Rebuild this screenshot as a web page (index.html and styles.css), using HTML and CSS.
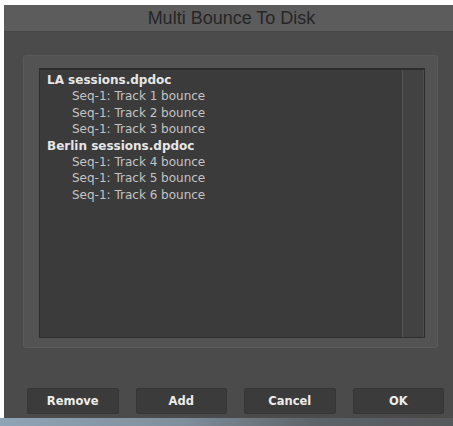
FILE: index.html
```html
<!DOCTYPE html>
<html>
<head>
<meta charset="utf-8">
<link rel="stylesheet" href="styles.css">
</head>
<body>
<div class="window">
  <div class="titlebar">Multi Bounce To Disk</div>
  <div class="panel">
    <div class="listbox">
      <div class="list">
        <div class="row group">LA sessions.dpdoc</div>
        <div class="row item">Seq-1: Track 1 bounce</div>
        <div class="row item">Seq-1: Track 2 bounce</div>
        <div class="row item">Seq-1: Track 3 bounce</div>
        <div class="row group">Berlin sessions.dpdoc</div>
        <div class="row item">Seq-1: Track 4 bounce</div>
        <div class="row item">Seq-1: Track 5 bounce</div>
        <div class="row item">Seq-1: Track 6 bounce</div>
      </div>
      <div class="scrollbar"></div>
    </div>
  </div>
  <div class="buttons">
    <div class="btn">Remove</div>
    <div class="btn">Add</div>
    <div class="btn">Cancel</div>
    <div class="btn">OK</div>
  </div>
</div>
<div class="desktop"></div>
</body>
</html>
```

FILE: styles.css
```css
html, body {
  margin: 0;
  padding: 0;
  background: #ffffff;
  width: 453px;
  height: 426px;
  overflow: hidden;
}

.window {
  margin: 5px 0 0 4px;
  height: 413px;
  background: #4b4b4b;
  display: flex;
  flex-direction: column;
  font-family: "DejaVu Sans", sans-serif;
}

.titlebar {
  height: 27px;
  background: #5c5c5c;
  border-bottom: 1px solid #464646;
  box-sizing: border-box;
  color: #262626;
  font-family: "Liberation Sans", Arial, sans-serif;
  font-size: 18px;
  line-height: 27px;
  text-align: center;
  padding-left: 6px;
}

.panel {
  margin: 23px 0 0 19px;
  width: 415px;
  height: 293px;
  box-sizing: border-box;
  background: #535353;
  border: 1px solid #5a5a5a;
  border-radius: 3px;
  padding: 12px 12px 9px 15px;
}

.listbox {
  height: 100%;
  box-sizing: border-box;
  background: #3b3b3b;
  border: 1px solid #2f2f2f;
  border-top: 2px solid #2c2c2c;
  display: flex;
}

.list {
  flex: 1;
  padding: 2px 0 0 7px;
}

.row {
  height: 16.4px;
  line-height: 16px;
  font-size: 12px;
  white-space: nowrap;
}

.group {
  font-weight: bold;
  color: #e6e6e6;
}

.item {
  color: #c4c4c4;
  padding-left: 25px;
}

.scrollbar {
  width: 20px;
  background: #424242;
  border-left: 1px solid #555555;
  border-right: 1px solid #4d4d4d;
}

.buttons {
  margin: 40px 0 0 23px;
  width: 417px;
  display: grid;
  grid-template-columns: repeat(4, 1fr);
  gap: 17px;
}

.btn {
  height: 26px;
  box-sizing: border-box;
  background: #3b3b3b;
  border: 1px solid #363636;
  border-radius: 2px;
  color: #ececec;
  font-weight: bold;
  font-size: 11.5px;
  line-height: 24px;
  text-align: center;
}

.desktop {
  height: 8px;
  background: linear-gradient(to right, #8fa4b6 0%, #7f8f9c 40%, #5d6368 70%, #56595c 100%);
}
```
